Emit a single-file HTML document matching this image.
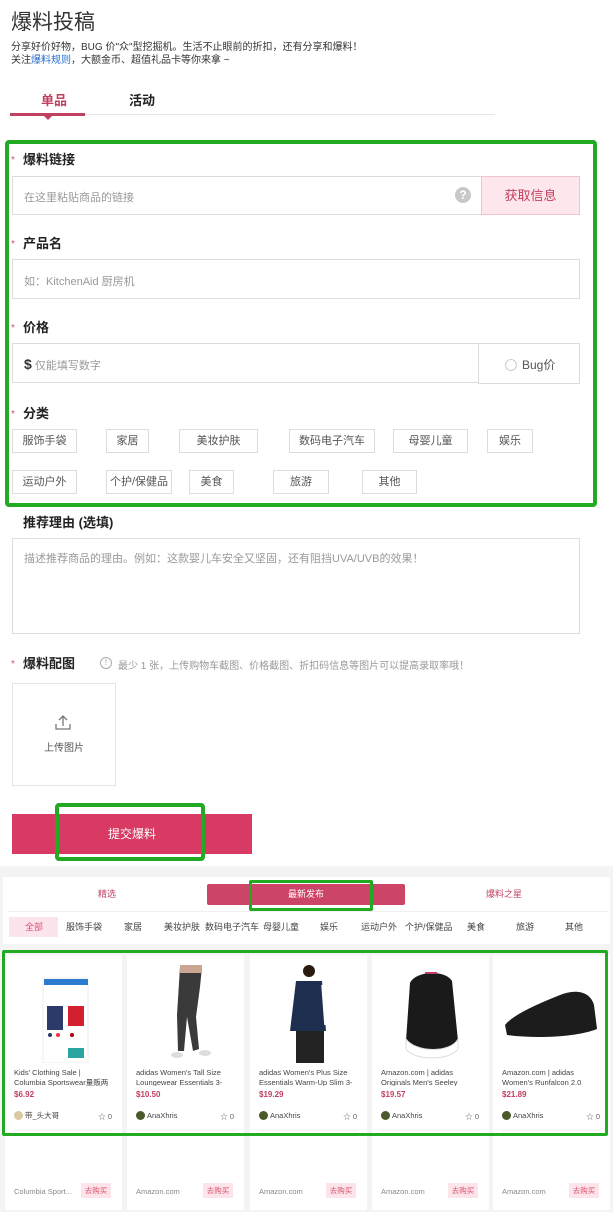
<!DOCTYPE html>
<html><head><meta charset="utf-8">
<style>
*{margin:0;padding:0;box-sizing:border-box}
body{width:613px;height:1212px;overflow:hidden;background:#fff;font-family:"Liberation Sans","Noto Sans CJK SC",sans-serif;color:#333;position:relative}
.a{position:absolute}
.lbl{position:absolute;left:23px;font-size:13px;font-weight:bold;color:#222;line-height:16px}
.star{position:absolute;left:11px;color:#d9536f;font-size:10px}
.inp{position:absolute;left:12px;width:568px;border:1px solid #dcdcdc;background:#fff;font-size:11px;color:#999}
.tag{position:absolute;height:24px;border:1px solid #dcdcdc;font-size:11px;color:#555;text-align:center;line-height:22px;white-space:nowrap}
.ct{position:absolute;top:917px;font-size:9px;color:#444;line-height:20px}
.card{position:absolute;top:955px;width:117px;height:255px;background:#fff}
.card .t{position:absolute;left:9px;top:113px;width:100px;font-size:7.5px;line-height:10px;color:#444;height:18px;overflow:hidden}
.card .p{position:absolute;left:9px;top:135px;font-size:8px;color:#c2405f;font-weight:bold}
.card .u{position:absolute;left:9px;top:156px;font-size:7.5px;color:#444;line-height:10px}
.card .u i{display:inline-block;width:9px;height:9px;border-radius:50%;background:#4a5a2a;vertical-align:-2px;margin-right:2px}
.card .s{position:absolute;right:10px;top:156px;font-size:7.5px;color:#666}
.card .ln{position:absolute;left:9px;right:9px;top:175px;border-top:1px solid #f0f0f0}
.card .m{position:absolute;left:9px;top:232px;font-size:7.5px;color:#888}
.card .b{position:absolute;right:11px;top:228px;width:30px;height:15px;background:#fde4ea;color:#d9536f;font-size:7.5px;text-align:center;line-height:15px}
.card svg{position:absolute;left:8px;top:8px}
</style></head><body>

<div class="a" style="left:11px;top:6px;font-size:21px;color:#333">爆料投稿</div>
<div class="a" style="left:11px;top:41px;font-size:10px;line-height:13px;color:#333">分享好价好物，BUG 价"众"型挖掘机。生活不止眼前的折扣，还有分享和爆料！<br>关注<span style="color:#2a6fd6">爆料规则</span>，大额金币、超值礼品卡等你来拿 ~</div>

<div class="a" style="left:41px;top:90px;font-size:13px;font-weight:bold;color:#c2405f">单品</div>
<div class="a" style="left:129px;top:90px;font-size:13px;font-weight:bold;color:#222">活动</div>
<div class="a" style="left:10px;top:114px;width:485px;height:1px;background:#e6e6e6"></div>
<div class="a" style="left:10px;top:113px;width:75px;height:3px;background:#c2405f"></div>
<div class="a" style="left:44px;top:116px;width:0;height:0;border-left:4px solid transparent;border-right:4px solid transparent;border-top:4px solid #c2405f"></div>

<div class="a" style="left:0;top:866px;width:613px;height:11px;background:#f4f4f4"></div>

<span class="star" style="top:155px">*</span><div class="lbl" style="top:152px">爆料链接</div>
<div class="inp" style="top:176px;height:39px;padding:12px 11px">在这里粘贴商品的链接</div>
<div class="a" style="left:455px;top:187px;width:16px;height:16px;border-radius:50%;background:#c8c8c8;color:#fff;font-size:12px;font-weight:bold;text-align:center;line-height:16px">?</div>
<div class="a" style="left:481px;top:176px;width:99px;height:39px;background:#fde6ec;border:1px solid #efc4cf;color:#c2405f;font-size:13px;text-align:center;line-height:37px">获取信息</div>

<span class="star" style="top:239px">*</span><div class="lbl" style="top:236px">产品名</div>
<div class="inp" style="top:259px;height:40px;padding:13px 11px">如：KitchenAid 厨房机</div>

<span class="star" style="top:323px">*</span><div class="lbl" style="top:320px">价格</div>
<div class="inp" style="top:343px;height:40px;padding:12px 11px"><b style="color:#333;font-size:14px">$</b> 仅能填写数字</div>
<div class="a" style="left:478px;top:343px;width:102px;height:41px;border:1px solid #dcdcdc;background:#fff;font-size:12px;color:#555;padding:12px 0 0 26px"><span style="display:inline-block;width:12px;height:12px;border:1px solid #ccc;border-radius:50%;vertical-align:-2px;margin-right:5px"></span>Bug价</div>

<span class="star" style="top:409px">*</span><div class="lbl" style="top:406px">分类</div>
<div class="tag" style="left:12px;top:429px;width:65px">服饰手袋</div>
<div class="tag" style="left:106px;top:429px;width:43px">家居</div>
<div class="tag" style="left:179px;top:429px;width:79px">美妆护肤</div>
<div class="tag" style="left:289px;top:429px;width:86px">数码电子汽车</div>
<div class="tag" style="left:393px;top:429px;width:75px">母婴儿童</div>
<div class="tag" style="left:487px;top:429px;width:46px">娱乐</div>
<div class="tag" style="left:12px;top:470px;width:65px">运动户外</div>
<div class="tag" style="left:106px;top:470px;width:66px">个护/保健品</div>
<div class="tag" style="left:189px;top:470px;width:45px">美食</div>
<div class="tag" style="left:273px;top:470px;width:56px">旅游</div>
<div class="tag" style="left:362px;top:470px;width:55px">其他</div>

<div class="a" style="left:5px;top:140px;width:592px;height:367px;border:4px solid #22aa22;border-radius:4px"></div>

<div class="lbl" style="top:515px">推荐理由 (选填)</div>
<div class="inp" style="top:538px;height:96px;padding:11px">描述推荐商品的理由。例如：这款婴儿车安全又坚固，还有阻挡UVA/UVB的效果！</div>

<span class="star" style="top:659px">*</span><div class="lbl" style="top:656px">爆料配图</div>
<div class="a" style="left:100px;top:657px;width:12px;height:12px;border:1px solid #aaa;border-radius:50%;font-size:8px;color:#999;text-align:center;line-height:10px">!</div>
<div class="a" style="left:118px;top:657px;font-size:10px;color:#999">最少 1 张，上传购物车截图、价格截图、折扣码信息等图片可以提高录取率哦！</div>
<div class="a" style="left:12px;top:683px;width:104px;height:103px;border:1px solid #e4e4e4"></div>
<svg class="a" style="left:54px;top:714px" width="18" height="16" viewBox="0 0 18 16"><path d="M9 12V2M5 6l4-4 4 4M2 10v5h14v-5" fill="none" stroke="#777" stroke-width="1.3"/></svg>
<div class="a" style="left:44px;top:739px;font-size:10px;color:#555">上传图片</div>

<div class="a" style="left:12px;top:814px;width:240px;height:40px;background:#d93a64;color:#fff;font-size:12px;text-align:center;line-height:40px">提交爆料</div>
<div class="a" style="left:55px;top:803px;width:150px;height:58px;border:4px solid #22aa22;border-radius:4px"></div>

<div class="a" style="left:0;top:877px;width:613px;height:335px;background:#f4f4f4"></div>
<div class="a" style="left:3px;top:877px;width:607px;height:67px;background:#fff"></div>
<div class="a" style="left:98px;top:887px;font-size:9px;color:#c2405f">精选</div>
<div class="a" style="left:207px;top:884px;width:198px;height:21px;background:#cc4466;border-radius:2px;color:#fff;font-size:9px;text-align:center;line-height:21px">最新发布</div>
<div class="a" style="left:486px;top:887px;font-size:9px;color:#c2405f">爆料之星</div>
<div class="a" style="left:249px;top:880px;width:124px;height:31px;border:3px solid #22aa22;border-radius:2px"></div>
<div class="a" style="left:8px;top:911px;width:600px;height:1px;background:#f0f0f0"></div>
<div class="a" style="left:9px;top:917px;width:49px;height:20px;background:#fce4ec"></div>
<div class="ct" style="left:25px;color:#d9536f">全部</div>
<div class="ct" style="left:66px">服饰手袋</div>
<div class="ct" style="left:124px">家居</div>
<div class="ct" style="left:164px">美妆护肤</div>
<div class="ct" style="left:205px">数码电子汽车</div>
<div class="ct" style="left:263px">母婴儿童</div>
<div class="ct" style="left:320px">娱乐</div>
<div class="ct" style="left:361px">运动户外</div>
<div class="ct" style="left:405px">个护/保健品</div>
<div class="ct" style="left:467px">美食</div>
<div class="ct" style="left:516px">旅游</div>
<div class="ct" style="left:565px">其他</div>

<div class="card" style="left:5px">
<svg width="100" height="100"><rect x="30" y="15" width="45" height="85" fill="#fff" stroke="#eee"/><rect x="31" y="16" width="44" height="6" fill="#2a7bd0"/><rect x="34" y="43" width="16" height="24" fill="#2c3a6a"/><rect x="55" y="43" width="16" height="20" fill="#d32030"/><circle cx="37" cy="72" r="2" fill="#2c3a6a"/><circle cx="45" cy="72" r="2" fill="#e34"/><circle cx="59" cy="72" r="2" fill="#a01"/><rect x="55" y="85" width="16" height="10" fill="#2aa6a0"/></svg>
<div class="t">Kids' Clothing Sale | Columbia Sportswear量贩两日大促，低至4折</div><div class="p">$6.92</div>
<div class="u"><i style="background:#d9c8a0"></i>带_头大哥</div><div class="s">☆ 0</div><div class="ln"></div>
<div class="m">Columbia Sport...</div><div class="b">去购买</div></div>

<div class="card" style="left:127px">
<svg width="100" height="100"><path d="M45 4h22l-2 20 -4 30 3 32 -6 2 -6-34 -3 34h-6l-1-36z" fill="#3a3a3a"/><rect x="45" y="2" width="22" height="8" fill="#c9a592"/><ellipse cx="42" cy="92" rx="6" ry="3" fill="#ddd"/><ellipse cx="70" cy="90" rx="6" ry="3" fill="#ddd"/></svg>
<div class="t">adidas Women's Tall Size Loungewear Essentials 3-Stripes Leggings, Dark Grey</div><div class="p">$10.50</div>
<div class="u"><i></i>AnaXhris</div><div class="s">☆ 0</div><div class="ln"></div>
<div class="m">Amazon.com</div><div class="b">去购买</div></div>

<div class="card" style="left:250px">
<svg width="100" height="100"><circle cx="51" cy="8" r="6" fill="#2a1a10"/><path d="M38 18h26l4 50h-36z" fill="#1e2e4e"/><path d="M38 68h28v32h-28z" fill="#222"/><path d="M64 22l3 40" stroke="#fff" stroke-width="1.5"/></svg>
<div class="t">adidas Women's Plus Size Essentials Warm-Up Slim 3-Stripes Track Top, Legend Ink</div><div class="p">$19.29</div>
<div class="u"><i></i>AnaXhris</div><div class="s">☆ 0</div><div class="ln"></div>
<div class="m">Amazon.com</div><div class="b">去购买</div></div>

<div class="card" style="left:372px">
<svg width="100" height="100"><path d="M30 20c5-12 35-14 42-2l6 60c-5 12-45 12-52 0z" fill="#1a1a1a"/><path d="M26 76c10 14 45 14 52 0v10c-8 12-44 12-52 0z" fill="#fff" stroke="#ddd"/><path d="M45 10h12" stroke="#c2405f" stroke-width="2"/></svg>
<div class="t">Amazon.com | adidas Originals Men's Seeley Sneaker, Black/Black/Scarlet</div><div class="p">$19.57</div>
<div class="u"><i></i>AnaXhris</div><div class="s">☆ 0</div><div class="ln"></div>
<div class="m">Amazon.com</div><div class="b">去购买</div></div>

<div class="card" style="left:493px">
<svg width="100" height="100"><path d="M4 62c8-10 30-20 55-30 15-6 30-4 34 10l3 24c-20 8-60 10-90 6z" fill="#1c1c1c"/></svg>
<div class="t">Amazon.com | adidas Women's Runfalcon 2.0 Running Shoe</div><div class="p">$21.89</div>
<div class="u"><i></i>AnaXhris</div><div class="s">☆ 0</div><div class="ln"></div>
<div class="m">Amazon.com</div><div class="b">去购买</div></div>

<div class="a" style="left:2px;top:950px;width:606px;height:186px;border:3px solid #22aa22;border-radius:2px"></div>
</body></html>
